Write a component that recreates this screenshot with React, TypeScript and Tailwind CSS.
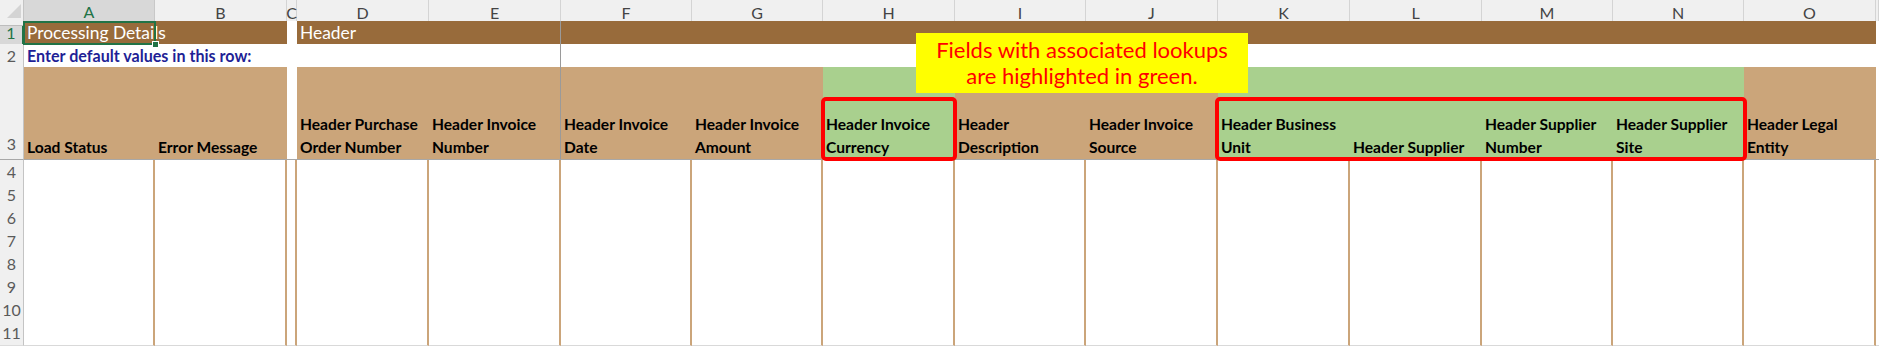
import React from "react";

const GRID =
  "grid grid-cols-[24px_131px_132px_10px_132px_132px_131px_131px_132px_131px_132px_132px_132px_131px_131px_132px_3px]";

type Col = { letter: string; lines: string[]; kind: "tan" | "green" | "white" | "none"; grayRight?: boolean };

const COLS: Col[] = [
  { letter: "A", lines: ["Load Status"], kind: "tan" },
  { letter: "B", lines: ["Error Message"], kind: "tan" },
  { letter: "C", lines: [], kind: "white" },
  { letter: "D", lines: ["Header Purchase", "Order Number"], kind: "tan" },
  { letter: "E", lines: ["Header Invoice", "Number"], kind: "tan", grayRight: true },
  { letter: "F", lines: ["Header Invoice", "Date"], kind: "tan" },
  { letter: "G", lines: ["Header Invoice", "Amount"], kind: "tan" },
  { letter: "H", lines: ["Header Invoice", "Currency"], kind: "green" },
  { letter: "I", lines: ["Header", "Description"], kind: "tan" },
  { letter: "J", lines: ["Header Invoice", "Source"], kind: "tan" },
  { letter: "K", lines: ["Header Business", "Unit"], kind: "green" },
  { letter: "L", lines: ["Header Supplier"], kind: "green" },
  { letter: "M", lines: ["Header Supplier", "Number"], kind: "green" },
  { letter: "N", lines: ["Header Supplier", "Site"], kind: "green" },
  { letter: "O", lines: ["Header Legal", "Entity"], kind: "tan" },
  { letter: "", lines: [], kind: "none" },
];

const ROWHDR =
  "flex items-center justify-center bg-[#f0f0f0] border-r border-r-[#c4c4c4] border-b border-b-[#dcdcdc] text-[16px] text-[#5a5a5a]";

function ColumnHeader() {
  return (
    <div className={`${GRID} h-[21px]`}>
      <div className="relative bg-[#f0f0f0] border-r border-r-[#c4c4c4] border-b border-b-[#bdbdbd]">
        <svg className="absolute left-0 top-0" width="24" height="21" viewBox="0 0 24 21">
          <polygon points="21,4 21,18 7,18" fill="#d4d4d4" />
        </svg>
      </div>
      {COLS.map((c, i) =>
        c.letter === "A" ? (
          <div
            key={i}
            className="flex items-center justify-center bg-[#d8d8d8] border-r border-r-[#c8c8c8] border-b-2 border-b-[#217346] text-[16px] text-[#217346]"
          >
            {c.letter}
          </div>
        ) : (
          <div
            key={i}
            className="flex items-center justify-center bg-[#f0f0f0] border-r border-r-[#d4d4d4] border-b border-b-[#bdbdbd] text-[16px] text-[#444444]"
          >
            {c.letter}
          </div>
        )
      )}
    </div>
  );
}

function Row1() {
  return (
    <div className={`${GRID} h-[23px]`}>
      <div className="flex items-center justify-center bg-[#d8d8d8] border-r-2 border-r-[#217346] border-b border-b-[#dcdcdc] text-[16px] text-[#217346]">
        1
      </div>
      <div className="col-span-2 bg-[#986b3b] pl-[3px] text-[17.4px] leading-[23px] text-white whitespace-nowrap">
        Processing Details
      </div>
      <div className="bg-white" />
      <div className="col-span-2 bg-[#986b3b] border-r border-r-[#9a9a9a] pl-[3px] text-[17.4px] leading-[23px] text-white whitespace-nowrap">
        Header
      </div>
      <div className="col-span-10 bg-[#986b3b]" />
      <div className="bg-white" />
    </div>
  );
}

function Row2() {
  return (
    <div className={`${GRID} h-[23px]`}>
      <div className={ROWHDR}>2</div>
      <div className="col-span-5 bg-white border-r border-r-[#9a9a9a] pl-[3px] text-[16.1px] leading-[23px] font-bold text-[#1f1f96] whitespace-nowrap">
        Enter default values in this row:
      </div>
      <div className="col-span-10 bg-white" />
      <div className="bg-white" />
    </div>
  );
}

function Row3() {
  return (
    <div className={`${GRID} h-[93px]`}>
      <div className="flex items-end justify-center pb-[3px] bg-[#f0f0f0] border-r border-r-[#c4c4c4] border-b border-b-[#a8a8a8] text-[16px] text-[#5a5a5a]">
        3
      </div>
      {COLS.map((c, i) => {
        const bg =
          c.kind === "tan"
            ? "bg-[#cba57a]"
            : c.kind === "green"
            ? "bg-[#a9d08e]"
            : "bg-white";
        const right = c.grayRight ? "border-r border-r-[#9a9a9a]" : "";
        return (
          <div
            key={i}
            className={`flex flex-col justify-end pl-[3px] border-b border-b-[#a8a8a8] ${bg} ${right}`}
          >
            {c.lines.map((l, j) => (
              <div
                key={j}
                className="text-[15.6px] leading-[23px] font-bold text-black whitespace-nowrap"
              >
                {l}
              </div>
            ))}
          </div>
        );
      })}
    </div>
  );
}

function BodyRow({ n, h }: { n: string; h: string }) {
  return (
    <div className={`${GRID} ${h}`}>
      <div className={ROWHDR}>{n}</div>
      {COLS.map((c, i) =>
        c.kind === "none" ? (
          <div key={i} className="bg-white border-b border-b-[#d9d9d9]" />
        ) : (
          <div
            key={i}
            className="bg-white border-b border-b-[#d9d9d9] border-r-2 border-r-[#cba57a]"
          />
        )
      )}
    </div>
  );
}

export default function App() {
  const rows = ["4", "5", "6", "7", "8", "9", "10", "11"];
  return (
    <div className="relative w-[1879px] h-[346px] overflow-hidden bg-white font-['Lato','Noto_Sans',sans-serif]">
      <ColumnHeader />
      <Row1 />
      <Row2 />
      <Row3 />
      {rows.map((n) => (
        <BodyRow key={n} n={n} h="h-[23px]" />
      ))}
      <BodyRow n="" h="h-[2px]" />

      {/* selection of A1 */}
      <div className="absolute left-[23px] top-[21px] w-[133px] h-[24px] border-2 border-[#217346]" />
      <div className="absolute left-[152px] top-[41px] w-[7px] h-[7px] bg-[#217346] border border-white" />

      {/* callout */}
      <div className="absolute left-[916px] top-[33px] w-[332px] h-[60px] bg-[#ffff00] flex flex-col items-center justify-center text-[22px] leading-[26px] text-[#ff0000] whitespace-nowrap">
        <div>Fields with associated lookups</div>
        <div>are highlighted in green.</div>
      </div>

      {/* red outlines */}
      <div className="absolute left-[821px] top-[97px] w-[136px] h-[64px] border-4 border-[#ff0000] rounded-[5px]" />
      <div className="absolute left-[1215px] top-[97px] w-[532px] h-[64px] border-4 border-[#ff0000] rounded-[5px]" />
    </div>
  );
}
